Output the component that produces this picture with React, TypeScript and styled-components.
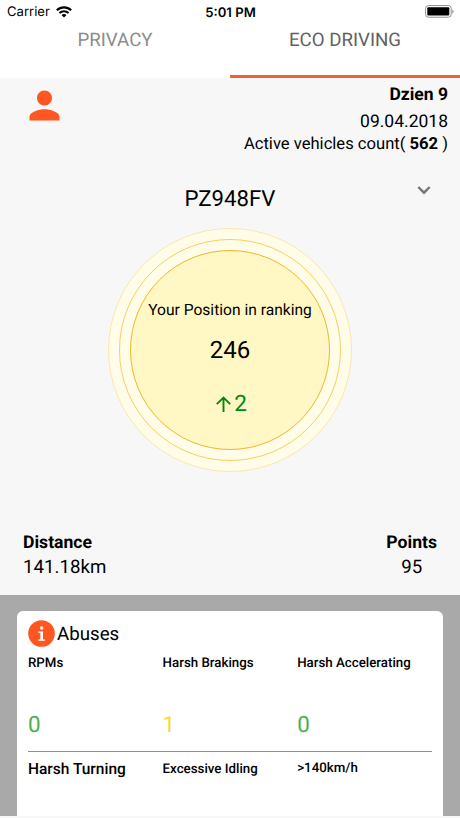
import React from 'react';
import styled, { createGlobalStyle } from 'styled-components';

const GlobalStyle = createGlobalStyle`
  * { box-sizing: border-box; }
  body {
    margin: 0;
    background: #f7f7f7;
    font-family: Roboto, sans-serif;
    text-rendering: geometricPrecision;
    color: #000;
    overflow: hidden;
  }
`;

const Screen = styled.div`
  width: 460px;
  height: 818px;
  display: flex;
  flex-direction: column;
  overflow: hidden;
  background: #f7f7f7;
`;

const StatusBar = styled.header`
  height: 24px;
  flex: none;
  display: grid;
  grid-template-columns: 1fr auto 1fr;
  align-items: center;
  padding: 0 6px 0 7px;
  background: #fff;
  font-family: Inter, sans-serif;
  font-size: 13.1px;
  line-height: 24px;
`;

const Carrier = styled.div`
  display: flex;
  align-items: center;
  gap: 6px;
  line-height: 22px;
`;

const Clock = styled.div`
  font-weight: 600;
  line-height: 22px;
  padding-top: 1px;
`;

const Battery = styled.div`
  display: flex;
  justify-content: flex-end;
  margin-top: -1px;
`;

const Tabs = styled.nav`
  height: 54px;
  flex: none;
  display: grid;
  grid-template-columns: 1fr 1fr;
  background: #fff;
`;

const Tab = styled.div<{ $active?: boolean }>`
  text-align: center;
  font-size: 18.7px;
  line-height: 33px;
  color: ${(p) => (p.$active ? '#616161' : '#8c8c8c')};
  border-bottom: 3px solid ${(p) => (p.$active ? '#f4602f' : 'transparent')};
`;

const Summary = styled.section`
  height: 88px;
  flex: none;
  display: flex;
  justify-content: space-between;
  padding: 0 12px 0 22px;
`;

const Avatar = styled.svg`
  width: 45px;
  height: 45px;
  margin-top: 5px;
  fill: #ff5722;
`;

const SummaryText = styled.div`
  text-align: right;
  padding-top: 3px;
`;

const SummaryLine = styled.div<{ $height: number; $bold?: boolean; $size?: number }>`
  font-size: ${(p) => p.$size ?? 17.5}px;
  line-height: ${(p) => p.$height}px;
  font-weight: ${(p) => (p.$bold ? 700 : 400)};
  white-space: pre;
`;

const VehiclePicker = styled.section`
  height: 62px;
  flex: none;
  display: grid;
  grid-template-columns: 1fr auto 1fr;
  padding: 0 24px;
`;

const Plate = styled.div`
  grid-column: 2;
  font-size: 22.2px;
  line-height: 66px;
`;

const Chevron = styled.svg`
  justify-self: end;
  width: 24px;
  height: 24px;
  margin-top: 12px;
`;

const Ring = styled.div<{ $line: string; $fill: string }>`
  border: 1px solid ${(p) => p.$line};
  background: ${(p) => p.$fill};
  border-radius: 50%;
  padding: 10px;
`;

const OuterRing = styled(Ring)`
  width: 244px;
  height: 244px;
  flex: none;
  align-self: center;
`;

const Disc = styled(Ring)`
  width: 200px;
  height: 200px;
  padding: 46px 0 0;
  display: flex;
  flex-direction: column;
  align-items: center;
  white-space: nowrap;
`;

const RankLabel = styled.div`
  font-size: 15.6px;
  line-height: 26px;
`;

const Rank = styled.div`
  font-size: 24px;
  line-height: 54px;
`;

const Change = styled.div`
  display: flex;
  align-items: center;
  gap: 1px;
  padding-left: 1px;
  font-size: 22.6px;
  line-height: 53px;
  color: #008a0c;
`;

const Totals = styled.section`
  flex: none;
  height: 123px;
  padding: 58px 23px 0;
  display: flex;
  justify-content: space-between;
`;

const Total = styled.div<{ $center?: boolean }>`
  text-align: ${(p) => (p.$center ? 'center' : 'left')};
`;

const TotalName = styled.div`
  font-size: 17.6px;
  font-weight: 700;
  line-height: 26px;
`;

const TotalValue = styled.div`
  font-size: 18.7px;
  line-height: 22px;
`;

const Panel = styled.section`
  height: 221px;
  flex: none;
  padding: 16px 17px 0;
  background: #a9a9a9;
`;

const Card = styled.div`
  height: 205px;
  padding: 8px 11px 0;
  background: #fff;
  border-radius: 6px 6px 0 0;
`;

const CardTitle = styled.div`
  display: flex;
  align-items: center;
  gap: 2px;
  height: 29px;
  font-size: 18.7px;
  line-height: 28px;
`;

const InfoIcon = styled.svg`
  width: 27px;
  height: 27px;
`;

const Metrics = styled.div<{ $divided?: boolean }>`
  display: grid;
  grid-template-columns: repeat(3, 134.6px);
  height: ${(p) => (p.$divided ? 104 : 60)}px;
  border-bottom: ${(p) => (p.$divided ? '1px solid #8e8e8e' : 'none')};
`;

const MetricName = styled.div<{ $size?: number; $height?: number }>`
  font-weight: 500;
  font-size: ${(p) => p.$size ?? 13.3}px;
  line-height: ${(p) => p.$height ?? 31}px;
  white-space: nowrap;
`;

const MetricValue = styled.div<{ $warn?: boolean }>`
  font-size: 22.4px;
  line-height: 32px;
  margin-top: 30px;
  color: ${(p) => (p.$warn ? '#fdd835' : '#4caf50')};
`;

export default function App() {
  return (
    <>
      <GlobalStyle />
      <Screen>
        <StatusBar>
          <Carrier>
            Carrier
            <svg width="16" height="12" viewBox="0 0 16 12" fill="none" stroke="#000" strokeWidth="2.1">
              <path d="M.8 4.3C4.9.4 11.1.4 15.2 4.3" />
              <path d="M3.4 7C6 4.6 10 4.6 12.6 7" />
              <path d="M8 11.5 5.5 9C6.9 7.7 9.1 7.7 10.5 9Z" fill="#000" stroke="none" />
            </svg>
          </Carrier>
          <Clock>5:01 PM</Clock>
          <Battery>
            <svg width="29" height="13" viewBox="0 0 29 13">
              <rect x=".6" y=".6" width="25.6" height="11.6" rx="2.8" fill="#fff" stroke="#8e8e8e" />
              <rect x="2.3" y="2.3" width="22" height="8.2" rx="1" />
              <path d="M27.3 4.5C29 5 29 8 27.3 8.5Z" fill="#8e8e8e" />
            </svg>
          </Battery>
        </StatusBar>
        <Tabs>
          <Tab>PRIVACY</Tab>
          <Tab $active>ECO DRIVING</Tab>
        </Tabs>
        <Summary>
          <Avatar viewBox="0 0 24 24">
            <path d="M12 12c2.21 0 4-1.79 4-4s-1.79-4-4-4-4 1.790-4 4 1.790 4 4 4zm0 2c-2.670 0-8 1.340-8 4v2h16v-2c0-2.660-5.330-4-8-4z" />
          </Avatar>
          <SummaryText>
            <SummaryLine $height={28} $bold>Dzien 9</SummaryLine>
            <SummaryLine $height={26}>09.04.2018</SummaryLine>
            <SummaryLine $height={19} $size={16.6}>Active vehicles count( <b>562</b> )</SummaryLine>
          </SummaryText>
        </Summary>
        <VehiclePicker>
          <Plate>PZ948FV</Plate>
          <Chevron viewBox="0 0 24 24">
            <path d="m6.300 9 5.700 5.700 5.700-5.700" fill="none" stroke="#777" strokeWidth="2.400" />
          </Chevron>
        </VehiclePicker>
        <OuterRing $line="#fbe7b0" $fill="#fffde7">
          <Ring $line="#f6cf62" $fill="#fffde7">
            <Disc $line="#efb62a" $fill="#fff8c4">
              <RankLabel>Your Position in ranking</RankLabel>
              <Rank>246</Rank>
              <Change>
                <svg width="19" height="20" viewBox="0 0 19 20" fill="none" stroke="currentColor" strokeWidth="1.900">
                  <path d="M2.800 10.200 9.500 3.500l6.700 6.700M9.500 4v14" />
                </svg>
                2
              </Change>
            </Disc>
          </Ring>
        </OuterRing>
        <Totals>
          <Total>
            <TotalName>Distance</TotalName>
            <TotalValue>141.18km</TotalValue>
          </Total>
          <Total $center>
            <TotalName>Points</TotalName>
            <TotalValue>95</TotalValue>
          </Total>
        </Totals>
        <Panel>
          <Card>
            <CardTitle>
              <InfoIcon viewBox="0 0 27 27">
                <circle cx="13.500" cy="13.500" r="13.300" fill="#ff5722" />
                <circle cx="13.700" cy="8" r="1.700" fill="#fff" />
                <path d="M10.300 11.500h4.700v8h1.900v1.300h-6.600v-1.300h2.100v-6.700h-2.100z" fill="#fff" />
              </InfoIcon>
              Abuses
            </CardTitle>
            <Metrics $divided>
              <div>
                <MetricName>RPMs</MetricName>
                <MetricValue>0</MetricValue>
              </div>
              <div>
                <MetricName>Harsh Brakings</MetricName>
                <MetricValue $warn>1</MetricValue>
              </div>
              <div>
                <MetricName>Harsh Accelerating</MetricName>
                <MetricValue>0</MetricValue>
              </div>
            </Metrics>
            <Metrics>
              <MetricName $size={15.5} $height={35}>Harsh Turning</MetricName>
              <MetricName $height={36}>Excessive Idling</MetricName>
              <MetricName $height={34}>&gt;140km/h</MetricName>
            </Metrics>
          </Card>
        </Panel>
      </Screen>
    </>
  );
}
